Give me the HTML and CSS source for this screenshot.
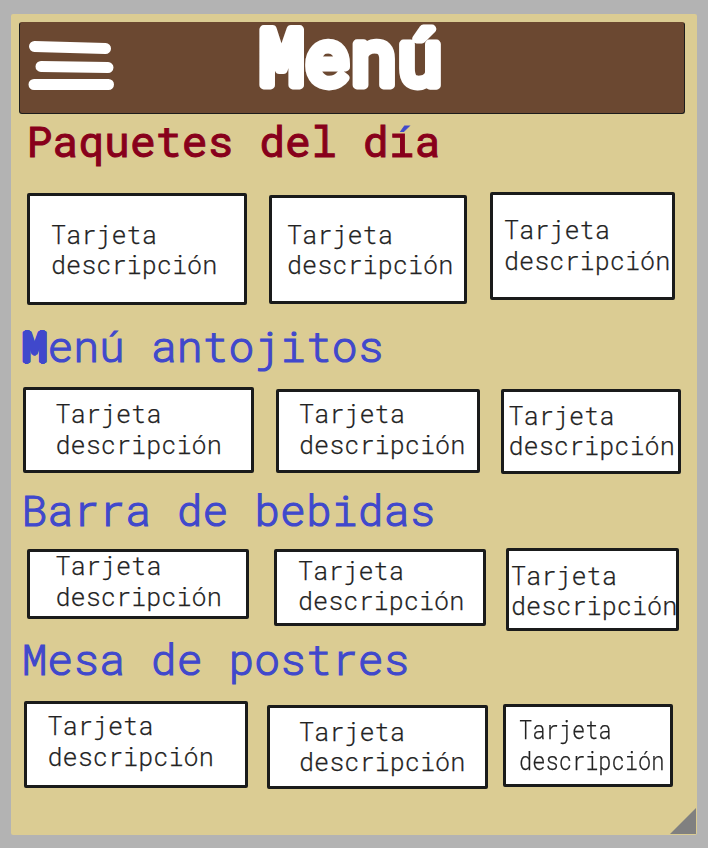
FILE: index.html
```html
<!DOCTYPE html>
<html lang="es">
<head>
<meta charset="utf-8">
<title>Menú</title>
<link rel="stylesheet" href="styles.css">
</head>
<body>
<main class="panel">
  <header class="topbar">
    <svg class="burger" viewBox="0 0 88 52" width="88" height="52" aria-hidden="true">
      <path d="M6.5 6.5 L77.5 8.5 M13 26.5 L80 27.5 M6 44.5 H80.5"/>
    </svg>
    <h1 class="title"><svg width="200" height="88" viewBox="0 0 200 88"><text x="8.2" y="62">Menú</text></svg></h1>
  </header>

  <section class="section packages">
    <h2 class="heading">Paquetes del d<span class="accent">í</span>a</h2>
    <div class="row">
      <article class="card"><p>Tarjeta<br>descripción</p></article>
      <article class="card"><p>Tarjeta<br>descripción</p></article>
      <article class="card"><p>Tarjeta<br>descripción</p></article>
    </div>
  </section>

  <section class="section snacks">
    <h2 class="heading"><span class="initial">M</span>enú antojitos</h2>
    <div class="row">
      <article class="card"><p>Tarjeta<br>descripción</p></article>
      <article class="card"><p>Tarjeta<br>descripción</p></article>
      <article class="card"><p>Tarjeta<br>descripción</p></article>
    </div>
  </section>

  <section class="section drinks">
    <h2 class="heading">Barra de bebidas</h2>
    <div class="row">
      <article class="card"><p>Tarjeta<br>descripción</p></article>
      <article class="card"><p>Tarjeta<br>descripción</p></article>
      <article class="card"><p>Tarjeta<br>descripción</p></article>
    </div>
  </section>

  <section class="section desserts">
    <h2 class="heading">Mesa de postres</h2>
    <div class="row">
      <article class="card"><p>Tarjeta<br>descripción</p></article>
      <article class="card"><p>Tarjeta<br>descripción</p></article>
      <article class="card"><p class="narrow">Tarjeta<br>descripción</p></article>
    </div>
  </section>
  <span class="corner"></span>
</main>
</body>
</html>
```
FILE: styles.css
```css
* { box-sizing: border-box; }

body {
  margin: 0;
  height: 848px;
  padding: 14px 11px 13px;
  background: #b3b3b3;
  font-family: "Roboto Mono", "Liberation Mono", monospace;
  overflow: hidden;
}

.panel {
  position: relative;
  height: 821px;
  padding-top: 8px;
  background: #dbcc93;
  border-radius: 2px;
}

.topbar {
  display: flex;
  width: 666px;
  height: 92px;
  margin-left: 8px;
  background: #6b4831;
  border: 1px solid #1c1c1c;
  border-top-color: #6b4831;
  border-radius: 3px;
}

.burger {
  margin: 17px 0 0 8px;
  fill: none;
  stroke: #fff;
  stroke-width: 11;
  stroke-linecap: round;
}

.title {
  margin: 0 0 0 134px;
  font-size: 77px;
  line-height: 1;
  font-weight: 400;
}

.title svg {
  display: block;
  overflow: visible;
  fill: #fff;
  stroke: #fff;
  stroke-width: 8.8px;
  stroke-linejoin: round;
}

.heading {
  margin: 0;
  padding-left: 10.5px;
  color: #4048cc;
  font-size: 43.1px;
  line-height: 52px;
  font-weight: 300;
  white-space: pre;
  -webkit-text-stroke: 1.2px #4048cc;
}

.packages .heading {
  height: 78px;
  padding: 0.5px 0 0 15.5px;
  color: #88001b;
  font-weight: 400;
  -webkit-text-stroke: 1px #88001b;
}

.accent {
  color: transparent;
  -webkit-text-stroke-color: transparent;
  background: linear-gradient(#4048cc 20px, #88001b 20px);
  -webkit-background-clip: text;
  background-clip: text;
}

.initial {
  font-weight: 400;
  text-shadow: 2px 0, -2px 0, 0 2px, 0 -2px, 1.4px 1.4px, -1.4px 1.4px, 1.4px -1.4px, -1.4px -1.4px;
}

.snacks .heading { height: 82px; padding-top: 15px; }
.drinks .heading { height: 74px; padding-top: 10.2px; }
.desserts .heading { height: 69.5px; padding-top: 2.2px; }

.row {
  display: flex;
  align-items: flex-start;
}

.packages .row { height: 113px; }
.snacks .row { height: 87px; }
.drinks .row { height: 83px; }

.card {
  flex: none;
  background: #fff;
  border: 3px solid #1a1b1b;
  border-radius: 2px;
  color: #222;
  font-size: 25.2px;
  line-height: 30.5px;
  font-weight: 300;
  -webkit-text-stroke: 0.25px #222;
  white-space: nowrap;
}

.card p { margin: -1px 0 0; }

.packages .card:nth-child(1) { width: 220px; height: 112px; margin: 1px 0 0 16px; padding: 24.8px 0 0 21px; }
.packages .card:nth-child(2) { width: 198px; height: 109px; margin: 3px 0 0 22px; padding: 22.8px 0 0 15px; }
.packages .card:nth-child(3) { width: 185px; height: 108px; margin: 0 0 0 23px; padding: 21.3px 0 0 11px; }

.snacks .card:nth-child(1) { width: 231px; height: 86px; margin: 0 0 0 12px; padding: 10.2px 0 0 29.5px; }
.snacks .card:nth-child(2) { width: 204px; height: 84px; margin: 2px 0 0 22px; padding: 8.2px 0 0 20px; }
.snacks .card:nth-child(3) { width: 180px; height: 85px; margin: 2px 0 0 21px; padding: 9.6px 0 0 4.5px; }

.drinks .card:nth-child(1) { width: 222px; height: 70px; margin: 1px 0 0 16px; padding: 0 0 0 25.5px; }
.drinks .card:nth-child(2) { width: 212px; height: 77px; margin: 1px 0 0 25px; padding: 4.8px 0 0 21px; }
.drinks .card:nth-child(3) { width: 173px; height: 83px; margin: 0 0 0 20px; padding: 10.8px 0 0 2px; }

.desserts .card:nth-child(1) { width: 224px; height: 87.5px; margin: 0 0 0 13px; padding: 8.8px 0 0 20.5px; }
.desserts .card:nth-child(2) { width: 221px; height: 84px; margin: 4.5px 0 0 19px; padding: 9.8px 0 0 29px; }
.desserts .card:nth-child(3) { width: 170px; height: 83px; margin: 3.5px 0 0 15px; padding: 9px 0 0 12.5px; }

.narrow {
  width: 165px;
  transform: scaleX(0.875);
  transform-origin: left;
}

.corner {
  position: absolute;
  right: 1px;
  bottom: 1px;
  width: 26px;
  height: 26px;
  background: #808080;
  clip-path: polygon(100% 0, 100% 100%, 0 100%);
}
```
